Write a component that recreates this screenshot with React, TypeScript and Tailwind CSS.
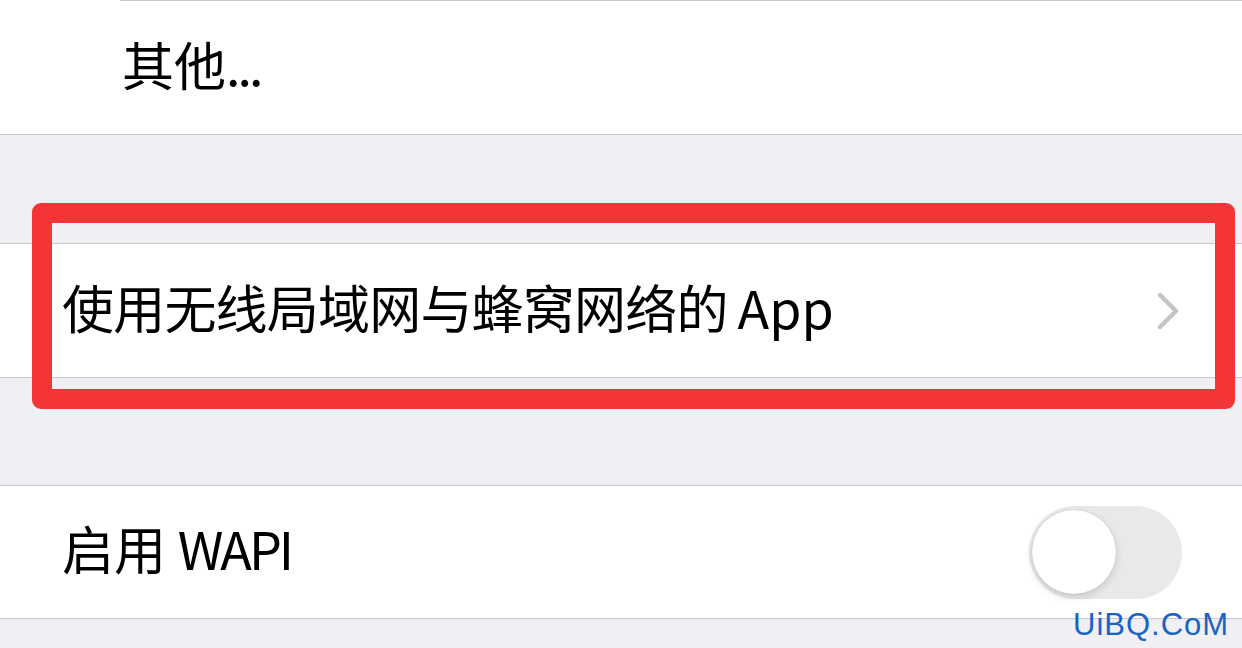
import React from "react";

export default function App() {
  return (
    <div className="relative w-[1242px] h-[648px] overflow-hidden bg-[#efeff4] font-['Noto_Sans_CJK_SC','Noto_Sans',sans-serif] text-black">
      {/* Row 1 */}
      <div className="bg-white">
        <div className="ml-[120px] h-px bg-[#c8c7cc]" />
        <div className="flex h-[133px] items-center pb-[8px] pl-[122px] text-[52px] leading-none">
          其他<span className="tracking-[-3px]">...</span>
        </div>
        <div className="h-px bg-[#c8c7cc]" />
      </div>

      <div className="h-[108px]" />

      {/* Row 2 */}
      <div className="border-y border-[#c8c7cc] bg-white">
        <div className="flex h-[133px] items-center justify-between pl-[62px] pr-[63px]">
          <span className="pb-[8px] text-[52px] leading-none">
            <span className="tracking-[-0.8px]">使用无线局域网与蜂窝网络的</span>
            <span className="ml-[10px]">App</span>
          </span>
          <svg width="22" height="38" viewBox="0 0 22 38" fill="none">
            <polyline
              points="3,3 19,19 3,35"
              stroke="#c4c4c7"
              strokeWidth="4.5"
              strokeLinecap="round"
              strokeLinejoin="round"
            />
          </svg>
        </div>
      </div>

      <div className="h-[107px]" />

      {/* Row 3 */}
      <div className="border-y border-[#c8c7cc] bg-white">
        <div className="flex h-[132px] items-center justify-between pl-[62px] pr-[60px]">
          <span className="pb-[8px] text-[52px] leading-none">
            启用 <span className="tracking-[-3px]">WAPI</span>
          </span>
          <div className="flex h-[93px] w-[153px] items-center rounded-full bg-[#e9e9eb] pl-[3px]">
            <div className="h-[84px] w-[84px] rounded-full bg-white shadow-[0_3px_8px_rgba(0,0,0,0.15),0_0_1px_rgba(0,0,0,0.2)]" />
          </div>
        </div>
      </div>

      {/* Red highlight overlay */}
      <div className="pointer-events-none absolute left-[32px] top-[203px] h-[206px] w-[1203px] rounded-[9px] border-[20px] border-[#f43538]" />

      {/* Watermark */}
      <div className="absolute left-[1073px] top-[609px] font-['Liberation_Sans',sans-serif] text-[31px] leading-none tracking-[1px] text-[#1864c6]">
        UiBQ.CoM
      </div>
    </div>
  );
}
